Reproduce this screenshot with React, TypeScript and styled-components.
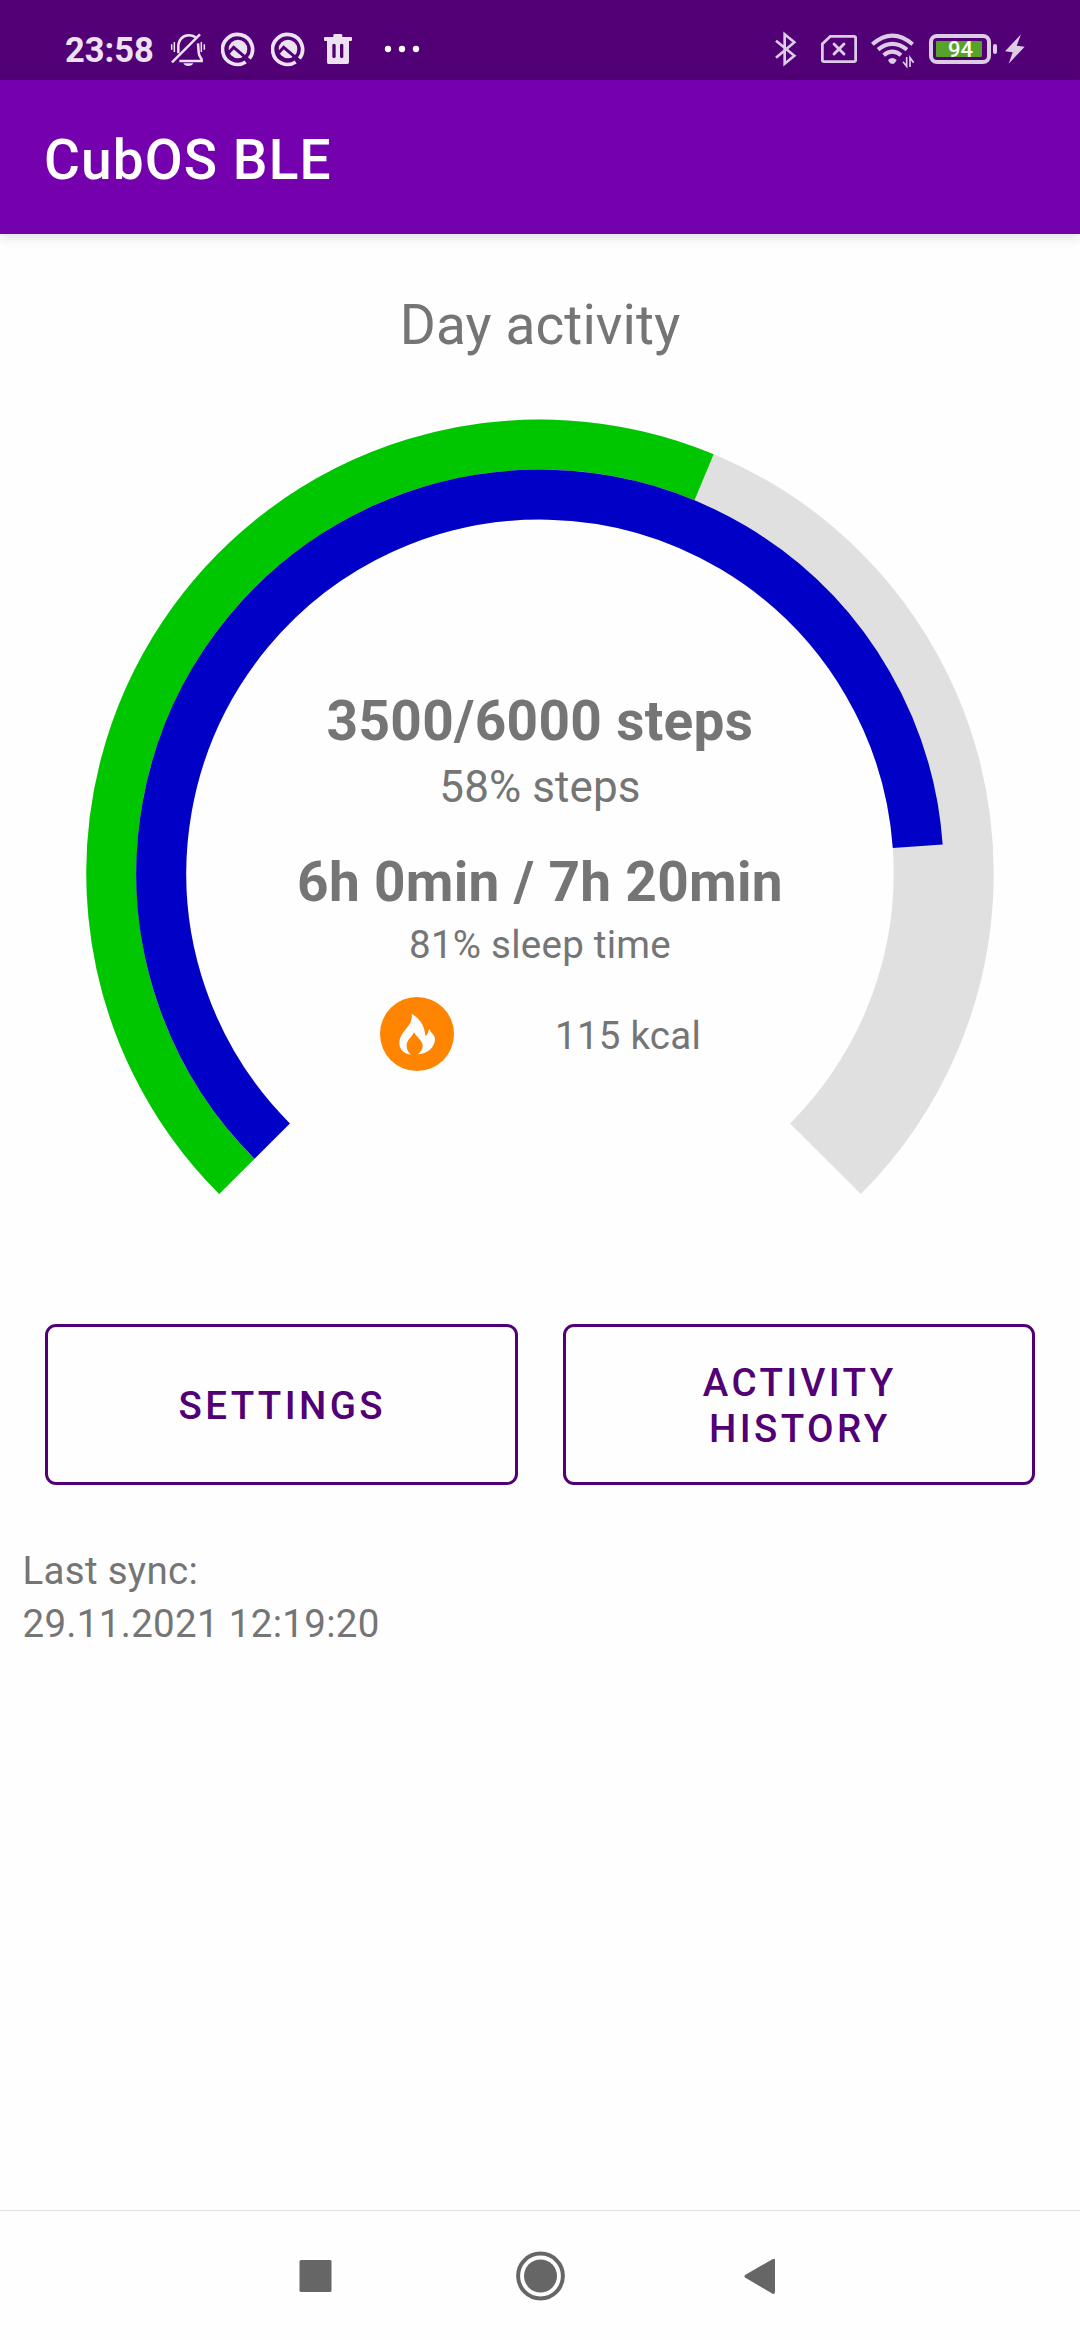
import React from "react";
import styled, { createGlobalStyle } from "styled-components";

const GlobalStyle = createGlobalStyle`
  * { box-sizing: border-box; }
  body { margin: 0; background: #fefefe; font-family: Roboto, "Noto Sans", sans-serif; }
`;

const Screen = styled.div`
  width: 1080px;
  height: 2340px;
  display: flex;
  flex-direction: column;
  background: #fefefe;
  overflow: hidden;
`;

const StatusBar = styled.header`
  height: 80px;
  flex: none;
  display: flex;
  justify-content: space-between;
  padding: 0 55px 0 65px;
  background: #520076;
`;

const StatusGroup = styled.div<{ $color: string }>`
  display: flex;
  align-items: center;
  color: ${(p) => p.$color};
`;

const Clock = styled.span`
  width: 105px;
  margin-top: 20px;
  font-size: 34.5px;
  font-weight: 700;
  line-height: 40px;
  white-space: nowrap;
`;

const StatusGlyph = styled.svg<{ $w: number; $gap?: number }>`
  width: ${(p) => p.$w}px;
  height: 80px;
  flex: none;
  margin-left: ${(p) => p.$gap ?? 0}px;
  fill: none;
`;

const BatteryBody = styled.div`
  width: 62px;
  height: 30px;
  margin: 18px 0 0 14px;
  padding: 3px;
  border: 4px solid currentColor;
  border-radius: 8px;
  display: flex;
`;

const BatteryLevel = styled.div`
  width: 46px;
  height: 16px;
  border-radius: 1px;
  background: #57a228;
  color: #fff;
  font-size: 22px;
  font-weight: 500;
  line-height: 18px;
  padding-left: 3px;
  text-align: center;
`;

const BatteryNub = styled.div`
  width: 4px;
  height: 10px;
  margin: 18px 0 0 2px;
  border-radius: 2px;
  background: currentColor;
`;

const AppBar = styled.div`
  height: 154px;
  flex: none;
  display: flex;
  align-items: center;
  padding: 6px 44px 0;
  background: #7500ad;
  box-shadow: 0 2px 12px rgba(0, 0, 0, 0.15);
  color: #fff;
  font-size: 55px;
  font-weight: 500;
  letter-spacing: 1.1px;
`;

const Content = styled.main`
  flex: 1;
  display: flex;
  flex-direction: column;
`;

const Label = styled.div<{ $size: number; $line: number; $top?: number; $bold?: boolean; $track?: number }>`
  font-size: ${(p) => p.$size}px;
  line-height: ${(p) => p.$line}px;
  margin-top: ${(p) => p.$top ?? 0}px;
  font-weight: ${(p) => (p.$bold ? 700 : 400)};
  letter-spacing: ${(p) => p.$track ?? 0}px;
  color: #757575;
  white-space: nowrap;
`;

const Heading = styled(Label)`
  text-align: center;
`;

const Gauge = styled.section`
  display: grid;
  justify-content: center;
  margin-top: 58px;
  height: 777px;
  > * {
    grid-area: 1 / 1;
  }
`;

const GaugeArt = styled.svg`
  width: 908px;
  height: 777px;
  display: block;
`;

const Readout = styled.div`
  display: flex;
  flex-direction: column;
  align-items: center;
  padding-top: 270px;
`;

const CalorieRow = styled.div`
  display: flex;
  align-items: center;
  align-self: stretch;
  margin-top: 29px;
  padding-left: 294px;
  gap: 101px;
`;

const FlameArt = styled.svg`
  width: 74px;
  height: 74px;
  display: block;
`;

const Actions = styled.div`
  display: grid;
  grid-template-columns: 1fr 1fr;
  gap: 45px;
  margin-top: 128px;
  padding: 0 45px;
`;

const OutlineButton = styled.button`
  height: 161px;
  padding: 3px 118px 0 120px;
  border: 3px solid #520076;
  border-radius: 11px;
  background: transparent;
  color: #520076;
  font-family: inherit;
  font-size: 38.5px;
  font-weight: 500;
  line-height: 46px;
  letter-spacing: 3.4px;
  text-transform: uppercase;
`;

const SyncInfo = styled.div`
  padding: 59px 22.5px 0;
`;

const NavBar = styled.nav`
  height: 130px;
  flex: none;
  border-top: 1px solid #e2e2e2;
  display: flex;
  align-items: center;
  justify-content: center;
  gap: 175.5px;
`;

const NavGlyph = styled.svg`
  width: 49px;
  height: 50px;
  fill: #666;
`;

const R_OUTER = 453.7;
const BAND = 50;
const CX = 454;
const CY = 454.3;

function arc(radius: number, share: number) {
  const point = (deg: number) => {
    const rad = (deg * Math.PI) / 180;
    return `${(CX + radius * Math.cos(rad)).toFixed(2)} ${(CY + radius * Math.sin(rad)).toFixed(2)}`;
  };
  const sweep = 270 * share;
  return `M${point(135)}A${radius} ${radius} 0 ${sweep > 180 ? 1 : 0} 1 ${point(135 + sweep)}`;
}

function AndroidQ({ gap }: { gap?: number }) {
  return (
    <StatusGlyph $w={34} $gap={gap} viewBox="33 -30 102 240">
      <path d="M118 146A45 45 0 1 0 107 156" stroke="currentColor" strokeWidth="11" />
      <circle cx="84" cy="117" r="28" fill="currentColor" />
      <path d="M56 128L71 112L124 157" stroke="#520076" strokeWidth="9" />
    </StatusGlyph>
  );
}

export default function App() {
  return (
    <Screen>
      <GlobalStyle />
      <StatusBar>
        <StatusGroup $color="#ece2f2">
          <Clock>23:58</Clock>
          <StatusGlyph $w={36} viewBox="390 -30 108 240" stroke="currentColor" strokeWidth="7.5">
            <path d="M415 130V110C415 88 430 76 446 76C455 76 461 78 467 82" />
            <path d="M474 100C476 112 474 124 478 136L485 148V153H418" />
            <path d="M396 157L480 73" />
            <path d="M430 160H460C456 167 450 168 445 168C440 168 434 167 430 160Z" fill="currentColor" stroke="none" />
            <path d="M395 103V119M403 96V126M484 96V126M493 103V119" strokeWidth="4.5" />
          </StatusGlyph>
          <AndroidQ gap={15} />
          <AndroidQ gap={16} />
          <StatusGlyph $w={28} $gap={19} viewBox="342 -30 84 240" fill="currentColor">
            <path
              fill="currentColor"
              fillRule="evenodd"
              d="M345 81H370V76Q370 72 374 72H393Q397 72 397 76V81H423Q426 81 426 84V90Q426 93 423 93H417V157Q417 162 412 162H355Q351 162 351 157V93H345Q342 93 342 90V84Q342 81 345 81ZM367 104V142Q372 147 377 142V104Q372 99 367 104ZM390 104V142Q395 147 400 142V104Q395 99 390 104Z"
            />
          </StatusGlyph>
          <StatusGlyph $w={36} $gap={32} viewBox="522 -30 108 240">
            <g fill="#fff">
              <circle cx="534" cy="117" r="9.5" />
              <circle cx="576" cy="117" r="9.5" />
              <circle cx="618" cy="117" r="9.5" />
            </g>
          </StatusGlyph>
        </StatusGroup>
        <StatusGroup $color="#dccce6">
          <StatusGlyph $w={22} viewBox="72 -30 66 240" stroke="currentColor" strokeWidth="8">
            <path d="M75 92L130 137L101 161V73L130 97L75 143" />
          </StatusGlyph>
          <StatusGlyph $w={36} $gap={24} viewBox="210 -30 108 240" stroke="currentColor" strokeWidth="8.5">
            <path d="M238 79H309Q314 79 314 84V150Q314 155 309 155H219Q214 155 214 150V102Z" />
            <path d="M249 102L279 132M279 102L249 132" strokeLinecap="round" />
          </StatusGlyph>
          <StatusGlyph $w={44} $gap={14} viewBox="362 -30 132 240" stroke="currentColor" strokeWidth="12">
            <path d="M366 103Q426 51 487 103" />
            <path d="M383 119Q426 84 470 119" />
            <path d="M400 136Q426 114 452 136" />
            <path d="M413 150Q426 138 439 150L434 158Q426 165 418 158Z" fill="currentColor" stroke="none" />
            <path d="M469 141V169L458 155M479 171V143L490 158" strokeWidth="5" />
          </StatusGlyph>
          <BatteryBody>
            <BatteryLevel>94</BatteryLevel>
          </BatteryBody>
          <BatteryNub />
          <StatusGlyph $w={20} $gap={8} viewBox="314 -30 60 240">
            <path d="M362 73L314 124L337 127L325 161L373 110L349 107Z" fill="currentColor" />
          </StatusGlyph>
        </StatusGroup>
      </StatusBar>
      <AppBar>CubOS BLE</AppBar>
      <Content>
        <Heading $size={55} $line={72} $top={55} $track={0.1}>
          Day activity
        </Heading>
        <Gauge>
          <GaugeArt viewBox="0 0 908 777" fill="none">
            <path d={arc(R_OUTER - BAND, 1)} stroke="#e0e0e0" strokeWidth={BAND * 2} />
            <path d={arc(R_OUTER - BAND / 2, 3500 / 6000)} stroke="#00c600" strokeWidth={BAND} />
            <path d={arc(R_OUTER - BAND * 1.5, 360 / 440)} stroke="#0000c6" strokeWidth={BAND} />
          </GaugeArt>
          <Readout>
            <Label $size={55} $line={64} $track={0.3} $bold>
              3500/6000 steps
            </Label>
            <Label $size={44} $line={52} $top={8} $track={0.1}>
              58% steps
            </Label>
            <Label $size={55} $line={64} $top={37} $track={0.3} $bold>
              6h 0min / 7h 20min
            </Label>
            <Label $size={38.5} $line={46} $top={8} $track={0.25}>
              81% sleep time
            </Label>
            <CalorieRow>
              <FlameArt viewBox="60 51 222 222">
                <circle cx="171" cy="162" r="111" fill="#ff8400" />
                <path
                  fill="#fefefe"
                  d="M155 101C158 120 150 132 136 149C124 164 118 174 118 189C118 209 133 222 153 224C143 215 140 208 140 196C140 181 155 172 162 157C170 171 188 183 188 197C188 207 183 215 172 223C202 222 225 202 225 177C225 163 212 160 208 146C204 152 206 161 196 168C195 138 178 114 155 101Z"
                />
              </FlameArt>
              <Label $size={38.5} $line={46} $top={4} $track={0.25}>
                115 kcal
              </Label>
            </CalorieRow>
          </Readout>
        </Gauge>
        <Actions>
          <OutlineButton>Settings</OutlineButton>
          <OutlineButton>Activity History</OutlineButton>
        </Actions>
        <SyncInfo>
          <Label $size={38.5} $line={53} $track={0.3}>
            Last sync:
          </Label>
          <Label $size={38.5} $line={53} $track={0.3}>
            29.11.2021 12:19:20
          </Label>
        </SyncInfo>
      </Content>
      <NavBar>
        <NavGlyph viewBox="0 0 49 50">
          <rect x="8.5" y="9" width="32" height="32" rx="1.5" />
        </NavGlyph>
        <NavGlyph viewBox="0 0 49 50">
          <circle cx="24.5" cy="25" r="22.4" fill="none" stroke="#666" strokeWidth="4" />
          <circle cx="24.5" cy="25" r="16.5" />
        </NavGlyph>
        <NavGlyph viewBox="0 0 49 50">
          <path d="M32 8.500L5 24Q4 25 5 26.500L33 43Q35 43 35 41V9Q35 7 32 8.500Z" />
        </NavGlyph>
      </NavBar>
    </Screen>
  );
}
